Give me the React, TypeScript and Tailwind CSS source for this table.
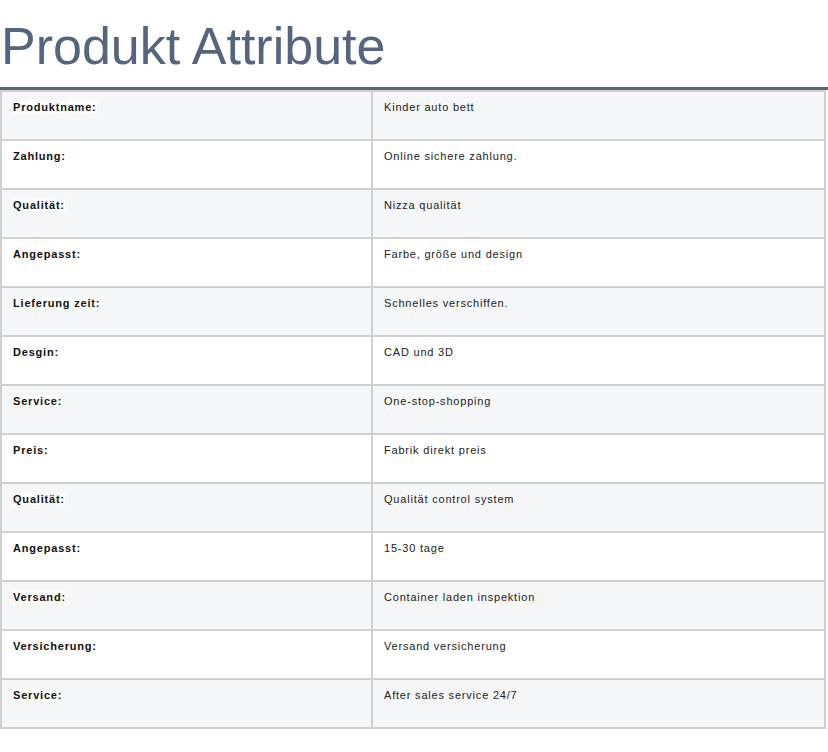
import React from "react";

const rows: [string, string][] = [
  ["Produktname:", "Kinder auto bett"],
  ["Zahlung:", "Online sichere zahlung."],
  ["Qualität:", "Nizza qualität"],
  ["Angepasst:", "Farbe, größe und design"],
  ["Lieferung zeit:", "Schnelles verschiffen."],
  ["Desgin:", "CAD und 3D"],
  ["Service:", "One-stop-shopping"],
  ["Preis:", "Fabrik direkt preis"],
  ["Qualität:", "Qualität control system"],
  ["Angepasst:", "15-30 tage"],
  ["Versand:", "Container laden inspektion"],
  ["Versicherung:", "Versand versicherung"],
  ["Service:", "After sales service 24/7"],
];

export default function App() {
  return (
    <div className="w-[828px] h-[752px] bg-white" style={{ fontFamily: '"Liberation Sans", Arial, sans-serif' }}>
      <div className="pt-[20px] pb-[15px] border-b-[3px] border-[#56657f] w-[828px]">
        <h1 className="text-[52px] leading-[52px] text-[#56657f] pl-[1px]">Produkt Attribute</h1>
      </div>
      <table className="border-collapse w-[826px] table-fixed">
        <colgroup>
          <col className="w-[371px]" />
          <col />
        </colgroup>
        <tbody>
          {rows.map(([k, v], i) => (
            <tr key={i} className={i % 2 === 0 ? "bg-[#f6f7f9] h-[49px]" : "bg-white h-[49px]"}>
              <td className="border-2 border-[#d0d0d0] align-top pl-[11px] pt-[7px] text-[11px] leading-[16px] tracking-[0.8px] text-[#111] font-bold">
                <span className="bg-white">{k}</span>
              </td>
              <td className="border-2 border-[#d0d0d0] align-top pl-[11px] pt-[7px] text-[11px] leading-[16px] tracking-[0.8px] text-[#222]">
                {v}
              </td>
            </tr>
          ))}
        </tbody>
      </table>
    </div>
  );
}
